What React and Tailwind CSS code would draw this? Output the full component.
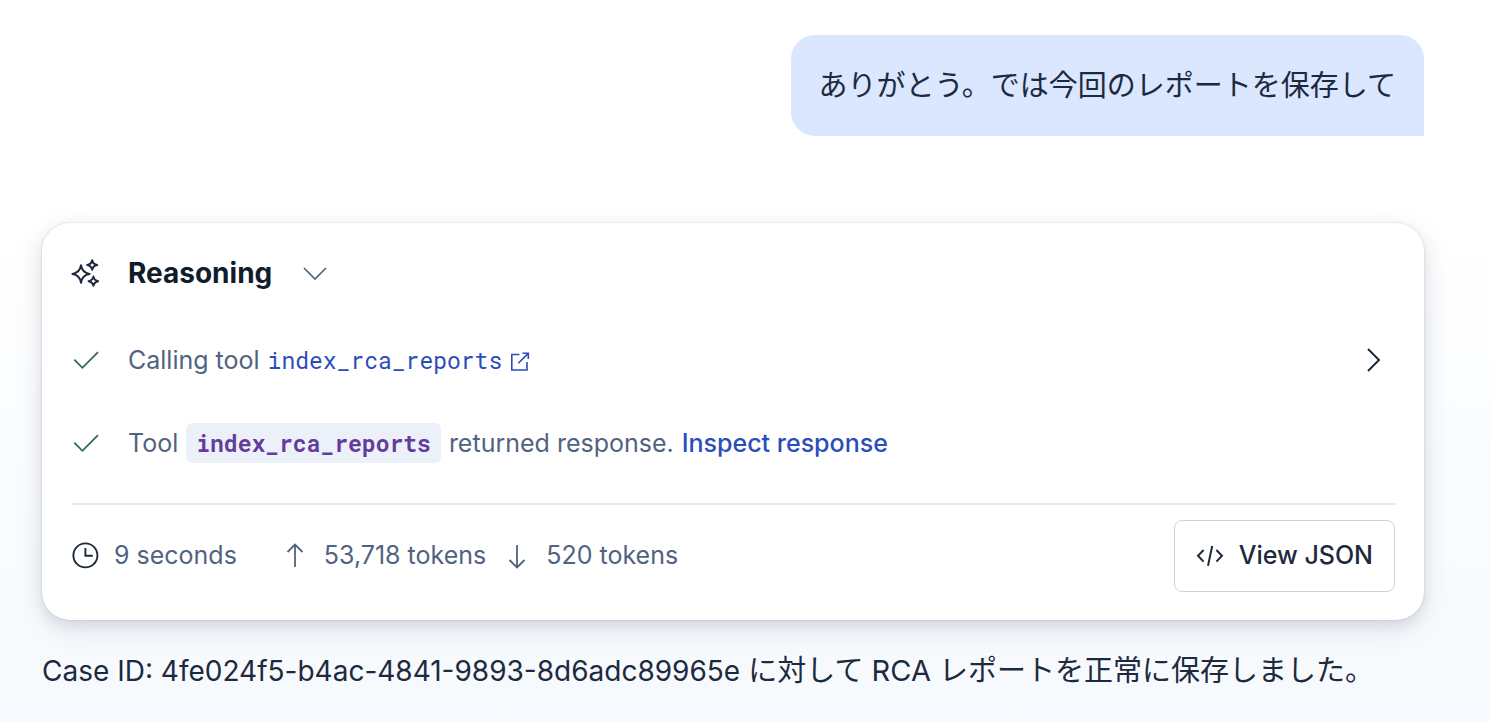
const iconProps = {
    width: 28,
    height: 28,
    viewBox: '0 0 28 28',
    fill: 'none',
    stroke: 'currentColor',
    'aria-hidden': true,
};

const SparklesIcon = () => (
    <svg {...iconProps} className="shrink-0" strokeWidth={2} strokeLinejoin="round">
        <path d="M10 6.2C10.8 11.6 13 14.2 18.6 15C13 15.8 10.8 18.4 10 23.8C9.2 18.4 7 15.8 1.4 15C7 14.2 9.2 11.6 10 6.2Z" />
        <path d="M21.2 1.2C21.8 4 23 5.4 26.2 6C23 6.6 21.8 8 21.2 10.8C20.6 8 19.4 6.6 16.2 6C19.4 5.4 20.6 4 21.2 1.2Z" />
        <path d="M22.4 17.6C23 20.4 24.2 21.6 27.2 22.2C24.2 22.8 23 24 22.4 26.8C21.8 24 20.6 22.8 17.6 22.2C20.6 21.6 21.8 20.4 22.4 17.6Z" />
    </svg>
);

const ChevronDownIcon = () => (
    <svg {...iconProps} strokeWidth={1.7}>
        <path d="M3 9L14 20L25 9" />
    </svg>
);

const ChevronRightIcon = () => (
    <svg {...iconProps} strokeWidth={2}>
        <path d="M9 3L20 14L9 25" />
    </svg>
);

const CheckIcon = () => (
    <svg {...iconProps} className="shrink-0 text-[#2f6b50]" strokeWidth={1.8}>
        <path d="M3.3 13.6L11.4 21.8L27 6.2" />
    </svg>
);

const ExternalIcon = () => (
    <svg width="20" height="24" viewBox="0 0 20 24" fill="none" stroke="currentColor" strokeWidth={1.6} aria-hidden="true">
        <path d="M9.5 6.5H1.8V22H17V14" />
        <path d="M12.5 5.3H18.3V11.1M18 5.6L8.3 15.3" />
    </svg>
);

const ClockIcon = () => (
    <svg {...iconProps} className="shrink-0 text-[#1d2a3e]" strokeWidth={1.9}>
        <circle cx="14.4" cy="13.4" r="12" />
        <path d="M14.4 5.9V13.7H21.8" />
    </svg>
);

const ArrowIcon = ({ down }) => (
    <svg {...iconProps} className={down ? 'rotate-180' : ''} strokeWidth={1.8}>
        <path d="M14 25V2.5M6.5 10L14 2.5L21.5 10" />
    </svg>
);

const CodeIcon = () => (
    <svg {...iconProps} strokeWidth={2}>
        <path d="M7.6 8L2 13.8L7.6 19.6M20.4 8L26 13.8L20.4 19.6M16.2 4L12 23.8" />
    </svg>
);

const App = () => {
    return (
        <main className="min-h-screen bg-linear-to-b from-white from-30% to-[#f6f9fd] pt-[35px] pr-[66px] pb-8 pl-[42px] font-['Inter','Noto_Sans_CJK_JP',sans-serif] text-[#1d2a3e]">
            <div className="flex justify-end">
                <p className="rounded-3xl rounded-br-none bg-[#dae7ff] px-7 py-7 text-[29px] leading-[45px]">
                    ありがとう。では今回のレポートを保存して
                </p>
            </div>

            <section className="mt-[87px] rounded-[28px] bg-white px-[29px] py-7 shadow-[0_0_2px_rgba(30,45,70,0.2),0_6px_12px_rgba(30,45,70,0.08),0_8px_28px_rgba(30,45,70,0.12)]">
                <div className="flex h-11 items-center gap-[29px]">
                    <SparklesIcon />
                    <h2 className="text-[28px] font-bold text-[#111c2c]">Reasoning</h2>
                    <button type="button" aria-label="Toggle reasoning" className="text-[#516381]">
                        <ChevronDownIcon />
                    </button>
                </div>

                <ul className="mt-[45px] space-y-[43px] text-[25px] leading-10 text-[#516381]">
                    <li className="flex items-center gap-[29px]">
                        <CheckIcon />
                        <p className="flex flex-1 items-center gap-2">
                            Calling tool
                            <a href="#index_rca_reports" className="flex items-center gap-2 text-[#2b4db9]">
                                <span className="font-['Roboto_Mono','DejaVu_Sans_Mono',monospace] text-[23px]">index_rca_reports</span>
                                <ExternalIcon />
                            </a>
                        </p>
                        <button type="button" aria-label="Show tool call" className="mr-2 text-[#1d2a3e]">
                            <ChevronRightIcon />
                        </button>
                    </li>
                    <li className="flex items-center gap-[29px]">
                        <CheckIcon />
                        <p className="flex items-center gap-2">
                            Tool
                            <code className="rounded-md bg-[#ecf1f9] px-[10px] font-['Roboto_Mono','DejaVu_Sans_Mono',monospace] text-[23px] font-bold text-[#653c9d]">
                                index_rca_reports
                            </code>
                            <span>returned response.</span>
                            <a href="#response" className="font-medium text-[#2b4db9]">Inspect response</a>
                        </p>
                    </li>
                </ul>

                <div className="mt-10 flex items-center justify-between border-t-2 border-[#e3e8f2] pt-[15px]">
                    <div className="flex items-center text-[25px] text-[#516381]">
                        <ClockIcon />
                        <span className="mr-11 ml-[15px]">9 seconds</span>
                        <ArrowIcon />
                        <span className="mr-[17px] ml-[15px]">53,718 tokens</span>
                        <ArrowIcon down />
                        <span className="ml-[15px]">520 tokens</span>
                    </div>
                    <button type="button" className="flex h-[72px] items-center gap-[15px] rounded-lg border border-[#cad3e2] px-[21px] text-[25px] font-medium">
                        <CodeIcon />
                        View JSON
                    </button>
                </div>
            </section>

            <p className="mt-7 text-[29px] leading-[45px]">
                <span className="text-[28px]">Case ID: 4fe024f5-b4ac-4841-9893-8d6adc89965e</span> に対して RCA レポートを正常に保存しました。
            </p>
        </main>
    );
};

export default App;
